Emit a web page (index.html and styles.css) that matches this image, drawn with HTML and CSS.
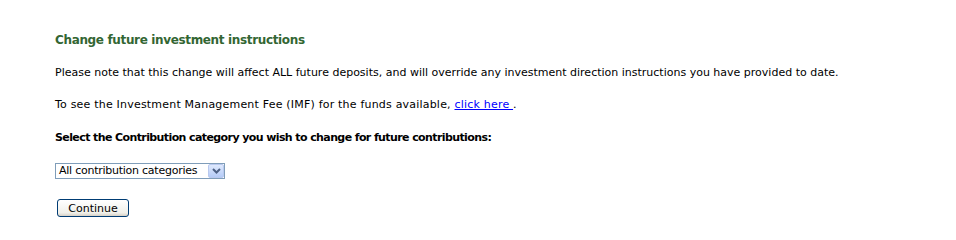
FILE: index.html
```html
<!DOCTYPE html>
<html>
<head>
<meta charset="utf-8">
<link rel="stylesheet" href="styles.css">
</head>
<body>
<div class="page">
  <h1 class="title">Change future investment instructions</h1>
  <p class="text">Please note that this change will affect ALL future deposits, and will override any investment direction instructions you have provided to date.</p>
  <p class="text text-wide">To see the Investment Management Fee (IMF) for the funds available, <a class="link" href="#">click here </a>.</p>
  <p class="text bold">Select the Contribution category you wish to change for future contributions:</p>
  <div class="select">
    <span class="select-value">All contribution categories</span>
    <span class="select-btn"><svg width="9" height="6" viewBox="0 0 9 6"><path d="M1 1 L4.5 4.5 L8 1" fill="none" stroke="#4d6185" stroke-width="2"/></svg></span>
  </div>
  <div class="actions"><button class="btn" type="button">Continue</button></div>
</div>
</body>
</html>
```
FILE: styles.css
```css
html, body {
  margin: 0;
  padding: 0;
  background: #ffffff;
}
.page {
  padding: 33px 0 0 55px;
  font-family: "DejaVu Sans", Verdana, sans-serif;
  font-size: 11px;
  color: #000;
}
.title {
  margin: 0 0 19px 0;
  font-size: 12px;
  font-weight: bold;
  color: #336633;
  line-height: 14px;
  letter-spacing: -0.35px;
}
.text {
  margin: 0 0 18px 0;
  line-height: 14px;
}
.text-wide {
  letter-spacing: 0.2px;
}
.text.bold {
  font-weight: bold;
  letter-spacing: -0.6px;
  margin-top: 19px;
}
.link {
  color: #0000ff;
  text-decoration: underline;
}
.select {
  display: inline-flex;
  align-items: center;
  box-sizing: border-box;
  width: 170px;
  height: 16px;
  border: 1px solid #7f9db9;
  background: #fff;
  margin-top: 0;
}
.select-value {
  flex: 1;
  padding-left: 3px;
  line-height: 14px;
  letter-spacing: -0.25px;
}
.select-btn {
  box-sizing: border-box;
  width: 16px;
  height: 14px;
  border: 1px solid #b9c9ef;
  border-radius: 2px;
  background: linear-gradient(#dfe9fd, #b5cbf7);
  display: flex;
  align-items: center;
  justify-content: center;
}
.actions {
  margin-top: 20px;
  padding-left: 2px;
}
.btn {
  box-sizing: border-box;
  width: 72px;
  height: 18px;
  padding: 0;
  border: 1px solid #003c74;
  border-radius: 3px;
  background: linear-gradient(#ffffff, #f0f0ea 80%, #d6d0c5);
  font-family: "DejaVu Sans", Verdana, sans-serif;
  font-size: 11px;
  color: #000;
}
```
